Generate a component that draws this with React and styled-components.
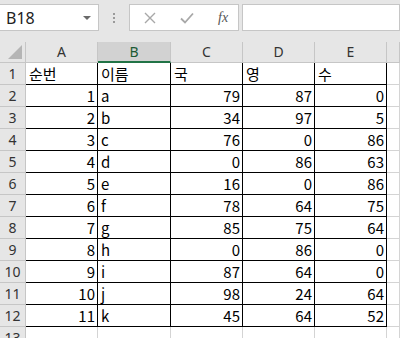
import React from "react";
import styled, { createGlobalStyle } from "styled-components";

const Global = createGlobalStyle`
  html, body { margin: 0; padding: 0; background: #e6e6e6; }
  body { font-family: "Liberation Sans", Arial, sans-serif; overflow: hidden; }
`

const Page = styled.div`
  width: 400px;
  height: 338px;
  overflow: hidden;
  background: #e6e6e6;
`

const Toolbar = styled.div`
  display: flex;
  align-items: center;
  height: 27px;
  padding-top: 4px;
  margin-bottom: 11px;
`

const NameBox = styled.div`
  box-sizing: border-box;
  width: 100px;
  height: 27px;
  margin-left: -1px;
  background: #fff;
  border: 1px solid #c6c6c6;
  display: flex;
  align-items: center;
  justify-content: space-between;
  padding: 0 7px 0 6px;
  font-size: 16px;
  color: #222;
  font-family: "Noto Sans", sans-serif;
`

const Caret = styled.span`
  width: 0;
  height: 0;
  border-left: 4px solid transparent;
  border-right: 4px solid transparent;
  border-top: 4px solid #6a6a6a;
`

const Dots = styled.div`
  width: 30px;
  display: flex;
  flex-direction: column;
  align-items: center;
  gap: 2px;
  span {
    width: 2px;
    height: 2px;
    background: #9a9a9a;
  }
`

const FxBox = styled.div`
  box-sizing: border-box;
  width: 110px;
  height: 27px;
  background: #fff;
  border: 1px solid #c6c6c6;
  display: flex;
  align-items: center;
  padding-left: 14px;
  gap: 24px;
`

const Fx = styled.span`
  font-family: "Liberation Serif", serif;
  font-style: italic;
  font-size: 14px;
  color: #555;
`

const Formula = styled.div`
  flex: 1;
  box-sizing: border-box;
  height: 27px;
  margin-left: 3px;
  background: #fff;
  border: 1px solid #c6c6c6;
`

const Sheet = styled.div`
  display: grid;
  grid-template-columns: 26px 72px 73px 72px 72px 72px 1fr;
  grid-template-rows: 21px repeat(13, 22px);
  background: #fff;
`

const Corner = styled.div`
  box-sizing: border-box;
  background: #e6e6e6;
  border-right: 1px solid #c6c6c6;
  border-bottom: 1px solid #c6c6c6;
  position: relative;
  &::after {
    content: "";
    position: absolute;
    right: 3px;
    bottom: 3px;
    width: 0;
    height: 0;
    border-left: 14px solid transparent;
    border-bottom: 14px solid #b5b5b5;
  }
`

const ColHead = styled.div`
  box-sizing: border-box;
  background: ${p => (p.$active ? "#d2d2d2" : "#e6e6e6")};
  border-right: 1px solid #c6c6c6;
  border-bottom: ${p => (p.$active ? "2px solid #217346" : "1px solid #c6c6c6")};
  color: ${p => (p.$active ? "#1c5a35" : "#333")};
  font-family: "Noto Sans", sans-serif;
  font-size: 14px;
  display: flex;
  align-items: center;
  justify-content: center;
  padding-bottom: 1px;
`

const RowHead = styled.div`
  box-sizing: border-box;
  background: #e6e6e6;
  border-right: 1px solid #c6c6c6;
  border-bottom: 1px solid #c6c6c6;
  color: #333;
  font-family: "Noto Sans", sans-serif;
  font-size: 14px;
  display: flex;
  align-items: center;
  justify-content: center;
`

const Cell = styled.div`
  box-sizing: border-box;
  border-right: 1px solid ${p => (p.$data ? "#000" : "#d4d4d4")};
  border-bottom: 1px solid ${p => (p.$data ? "#000" : "#d4d4d4")};
  font-family: "Noto Sans CJK KR", "Noto Sans", sans-serif;
  font-size: 15px;
  color: #000;
  display: flex;
  align-items: center;
  justify-content: ${p => (p.$num ? "flex-end" : "flex-start")};
  padding: 0 2px 0 3px;
  white-space: nowrap;
  overflow: hidden;
`

const rows = [
  ["순번", "이름", "국", "영", "수"],
  [1, "a", 79, 87, 0],
  [2, "b", 34, 97, 5],
  [3, "c", 76, 0, 86],
  [4, "d", 0, 86, 63],
  [5, "e", 16, 0, 86],
  [6, "f", 78, 64, 75],
  [7, "g", 85, 75, 64],
  [8, "h", 0, 86, 0],
  [9, "i", 87, 64, 0],
  [10, "j", 98, 24, 64],
  [11, "k", 45, 64, 52],
]

const cols = ["A", "B", "C", "D", "E", ""]

export default function App() {
  return (
    <Page>
      <Global />
      <Toolbar>
        <NameBox>
          <span>B18</span>
          <Caret />
        </NameBox>
        <Dots><span /><span /><span /></Dots>
        <FxBox>
          <svg width="12" height="12" viewBox="0 0 12 12">
            <path d="M1 1l10 10M11 1L1 11" stroke="#a8a8a8" strokeWidth="1.4" fill="none" />
          </svg>
          <svg width="14" height="12" viewBox="0 0 14 12">
            <path d="M1 6.5l4 4L13 1.5" stroke="#a8a8a8" strokeWidth="1.8" fill="none" />
          </svg>
          <Fx>fx</Fx>
        </FxBox>
        <Formula />
      </Toolbar>
      <Sheet>
        <Corner />
        {cols.map((c, i) => (
          <ColHead key={i} $active={c === "B"}>{c}</ColHead>
        ))}
        {rows.map((r, ri) => (
          <React.Fragment key={ri}>
            <RowHead>{ri + 1}</RowHead>
            {r.map((v, ci) => (
              <Cell key={ci} $data $num={typeof v === "number"}>{v}</Cell>
            ))}
            <Cell />
          </React.Fragment>
        ))}
        <RowHead>13</RowHead>
        {cols.map((c, i) => (
          <Cell key={i} />
        ))}
      </Sheet>
    </Page>
  );
}
